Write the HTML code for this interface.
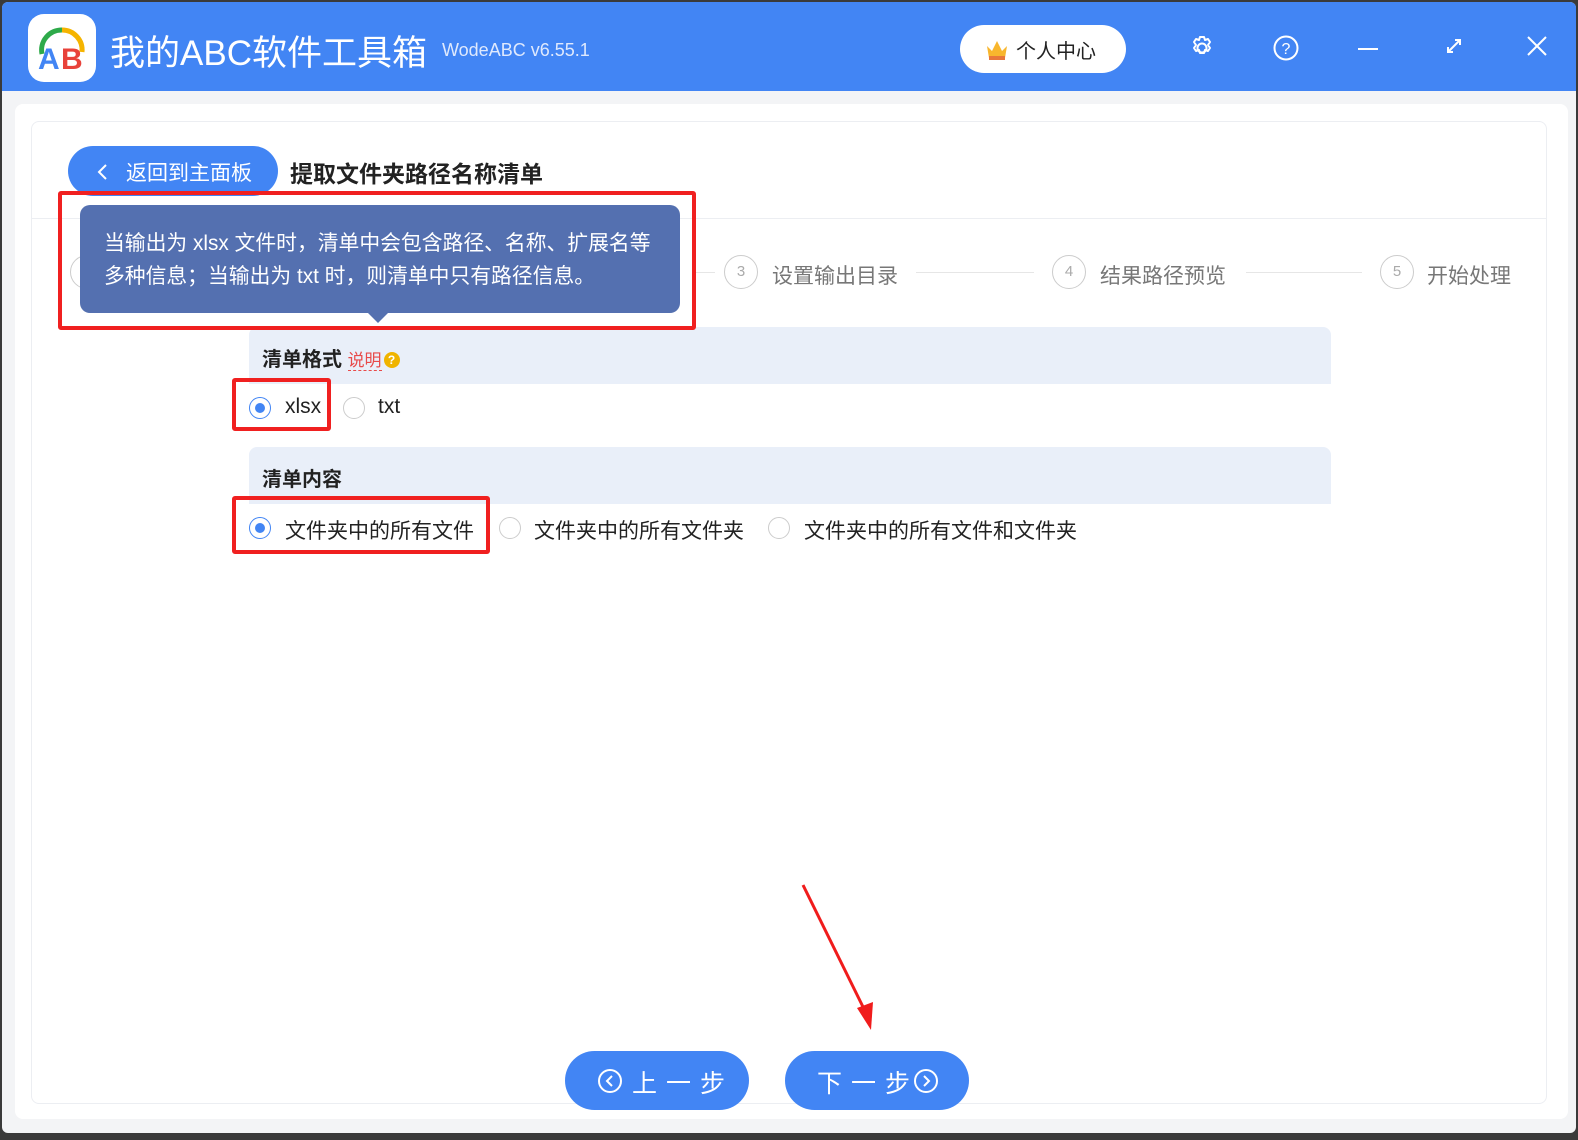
<!DOCTYPE html>
<html><head><meta charset="utf-8"><style>
*{margin:0;padding:0;box-sizing:border-box}
body{width:1578px;height:1140px;background:#3a3a3a;font-family:"Liberation Sans","Noto Sans CJK SC",sans-serif;position:relative;overflow:hidden}
.win{position:absolute;left:2px;top:2px;width:1574px;height:1131px;background:#f3f4f6;border-radius:6px;overflow:hidden}
.hdr{position:absolute;left:0;top:0;width:100%;height:89px;background:#4285f4}
.logo{position:absolute;left:26px;top:12px;width:68px;height:68px;background:#fff;border-radius:16px}
.title{position:absolute;left:108px;top:23px;font-size:35px;color:#fff}
.ver{position:absolute;left:440px;top:38px;font-size:18px;color:#dfe9fd}
.pc{position:absolute;left:958px;top:23px;width:166px;height:48px;background:#fff;border-radius:24px;font-size:20px;color:#222;padding:10px 0 0 56px}
.ic{position:absolute;top:32px}
.card{position:absolute;left:15px;top:104px;width:1553px;height:1015px;background:#fff;border-radius:8px}
.inner{position:absolute;left:31px;top:121px;width:1516px;height:983px;border:1px solid #eceef2;border-radius:8px}
.back{position:absolute;left:68px;top:146px;width:210px;height:50px;background:#4285f4;border-radius:25px;color:#fff;font-size:21px;padding:11px 0 0 58px}
.h1{position:absolute;left:290px;top:155px;font-size:23px;font-weight:bold;color:#222}
.hr{position:absolute;left:32px;top:218px;width:1514px;height:1px;background:#eceef2}
.step{position:absolute;top:255px;width:34px;height:34px;border:1.5px solid #ccc;border-radius:50%;color:#aaa;font-size:15px;text-align:center;line-height:31px}
.stl{position:absolute;top:260px;font-size:21px;color:#777}
.line{position:absolute;top:272px;height:1px;background:#e6e6e6}
.sec{position:absolute;left:249px;width:1082px;height:57px;background:#e9eff9;border-radius:8px 8px 0 0}
.sec b{position:absolute;left:13px;top:16px;font-size:20px;color:#222}
.radio{position:absolute;width:22px;height:22px;border:1px solid #ccc;border-radius:50%}
.radio.on{border-color:#4285f4}
.radio.on::after{content:"";position:absolute;left:5px;top:5px;width:10px;height:10px;border-radius:50%;background:#4285f4}
.lab{position:absolute;font-size:21px;color:#222}
.red{position:absolute;border:4px solid #f02020;border-radius:3px}
.tip{position:absolute;left:80px;top:205px;width:600px;height:108px;background:#5470b0;border-radius:10px;color:#fff;font-size:20.8px;line-height:33px;padding:22px 0 0 24px;white-space:nowrap}
.tip::after{content:"";position:absolute;left:288px;bottom:-10px;border:10px solid transparent;border-top-color:#5470b0;border-bottom:0}
.btn{position:absolute;top:1051px;width:184px;height:59px;background:#4285f4;border-radius:30px;color:#fff;font-size:25px;letter-spacing:9px;padding-top:13px}
</style></head><body>
<div class="win">
<div class="hdr"></div>
<div class="logo"><svg width="68" height="68" viewBox="0 0 68 68"><path d="M14 40 A20 20 0 0 1 34 16" stroke="#2eaa4a" stroke-width="5" fill="none"/><path d="M34 16 A20 20 0 0 1 54 38" stroke="#f5b400" stroke-width="5" fill="none"/><text x="10" y="55" font-size="30" font-weight="bold" fill="#4285f4" font-family="Liberation Sans">A</text><text x="33" y="55" font-size="30" font-weight="bold" fill="#e8423a" font-family="Liberation Sans">B</text></svg></div>
<div class="title">我的ABC软件工具箱</div>
<div class="ver">WodeABC v6.55.1</div>
<div class="pc">个人中心</div>
<svg style="position:absolute;left:982px;top:36px" width="26" height="24"><path d="M3 8 L8 13 L13 3 L18 13 L23 8 L21 20 L5 20Z" fill="#f8b62d"/><rect x="5" y="18" width="16" height="4" fill="#e8773a"/></svg>
<svg class="ic" style="left:1186px" width="28" height="28" viewBox="0 0 28 28"><circle cx="14" cy="14" r="4.5" stroke="#fff" stroke-width="2" fill="none"/><path d="M12 3h4l1 3 3-1 2 3-2 3 2 3-2 3-3-1-1 3h-4l-1-3-3 1-2-3 2-3-2-3 2-3 3 1z" stroke="#fff" stroke-width="2" fill="none" stroke-linejoin="round"/></svg>
<svg class="ic" style="left:1270px" width="28" height="28"><circle cx="14" cy="14" r="11.5" stroke="#fff" stroke-width="2" fill="none"/><text x="14" y="20" text-anchor="middle" fill="#fff" font-size="16" font-family="Liberation Sans">?</text></svg>
<div style="position:absolute;left:1356px;top:46px;width:20px;height:2px;background:#fff"></div>
<svg class="ic" style="left:1440px" width="24" height="24"><path d="M6 18 L18 6 M13 6h5v5 M6 13v5h5" stroke="#fff" stroke-width="2" fill="none"/></svg>
<svg class="ic" style="left:1523px" width="24" height="24"><path d="M3 3L21 21M21 3L3 21" stroke="#fff" stroke-width="2"/></svg>
</div>
<div class="card"></div>
<div class="inner"></div>
<div class="back"><svg style="position:absolute;left:28px;top:17px" width="12" height="18"><path d="M10 2L3 9l7 7" stroke="#fff" stroke-width="2" fill="none"/></svg>返回到主面板</div>
<div class="h1">提取文件夹路径名称清单</div>
<div class="hr"></div>
<div class="step" style="left:70px"></div>
<div class="line" style="left:695px;width:20px"></div>
<div class="step" style="left:724px">3</div><div class="stl" style="left:772px">设置输出目录</div>
<div class="line" style="left:916px;width:118px"></div>
<div class="step" style="left:1052px">4</div><div class="stl" style="left:1100px">结果路径预览</div>
<div class="line" style="left:1246px;width:116px"></div>
<div class="step" style="left:1380px">5</div><div class="stl" style="left:1427px">开始处理</div>
<div class="sec" style="top:327px"><b>清单格式 <span style="color:#e84a4a;font-weight:normal;font-size:17px;border-bottom:1px dashed #e84a4a">说明</span><span style="display:inline-block;width:16px;height:16px;border-radius:50%;background:#f0b400;color:#fff;font-size:12px;text-align:center;line-height:16px;vertical-align:2px;margin-left:2px">?</span></b></div>
<div class="radio on" style="left:249px;top:397px"></div><div class="lab" style="left:285px;top:395px">xlsx</div>
<div class="radio" style="left:343px;top:397px"></div><div class="lab" style="left:378px;top:395px">txt</div>
<div class="red" style="left:232px;top:378px;width:99px;height:53px"></div>
<div class="sec" style="top:447px"><b>清单内容</b></div>
<div class="radio on" style="left:249px;top:517px"></div><div class="lab" style="left:285px;top:515px">文件夹中的所有文件</div>
<div class="radio" style="left:499px;top:517px"></div><div class="lab" style="left:534px;top:515px">文件夹中的所有文件夹</div>
<div class="radio" style="left:768px;top:517px"></div><div class="lab" style="left:804px;top:515px">文件夹中的所有文件和文件夹</div>
<div class="red" style="left:232px;top:496px;width:258px;height:58px"></div>
<div class="tip">当输出为 xlsx 文件时，清单中会包含路径、名称、扩展名等<br>多种信息；当输出为 txt 时，则清单中只有路径信息。</div>
<div class="red" style="left:58px;top:191px;width:638px;height:139px"></div>
<svg style="position:absolute;left:795px;top:880px" width="90" height="155"><path d="M8 5 L72 135" stroke="#f01c1c" stroke-width="3"/><path d="M62 128 L76 150 L78 122Z" fill="#f01c1c"/></svg>
<div class="btn" style="left:565px;padding-left:67px">上一步<svg style="position:absolute;left:32px;top:17px" width="26" height="26"><circle cx="13" cy="13" r="11" stroke="#fff" stroke-width="2" fill="none"/><path d="M15 8l-5 5 5 5" stroke="#fff" stroke-width="2" fill="none"/></svg></div>
<div class="btn" style="left:785px;padding-left:32px">下一步<svg style="position:absolute;left:128px;top:17px" width="26" height="26"><circle cx="13" cy="13" r="11" stroke="#fff" stroke-width="2" fill="none"/><path d="M11 8l5 5-5 5" stroke="#fff" stroke-width="2" fill="none"/></svg></div>
</body></html>
